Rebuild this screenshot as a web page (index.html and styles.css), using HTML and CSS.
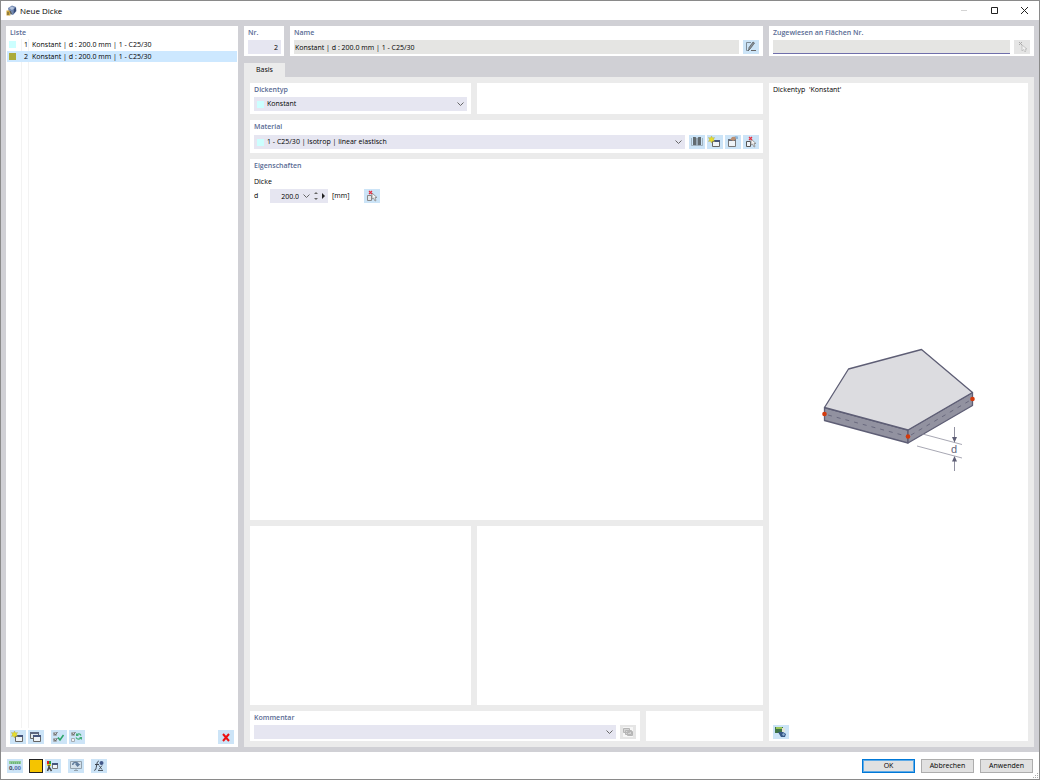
FILE: index.html
```html
<!DOCTYPE html>
<html lang="de">

<head>
    <meta charset="UTF-8">
    <meta name="viewport" content="width=device-width, initial-scale=1.0">
    <title>Neue Dicke</title>
    <link rel="stylesheet" href="styles.css">
</head>

<body>
    <div class="window">
        <header class="titlebar">
            <svg class="app-icon" viewBox="0 0 11 11" aria-hidden="true">
                <path d="M2 3 6 .5 10 2 10.500 6 7 10 3 9z" fill="#7288b0" />
                <path d="M3 3 6 1.500 8.500 3 6 5z" fill="#b4c3dc" />
                <path d="M8 4 10 2.500 10 6 7.500 9z" fill="#344a78" />
                <path d="M.5 5.500h3l1 5h-4z" fill="#cfa638" />
                <path d="M2 7v3M4 6l1.500 3" stroke="#5b563f" />
            </svg>
            <h1>Neue Dicke</h1>
            <div class="window-controls">
                <button type="button" aria-label="Minimieren" disabled>
                    <svg viewBox="0 0 9 9"><path d="M1 4.500h6" stroke="#d4d4d4" /></svg>
                </button>
                <button type="button" aria-label="Maximieren">
                    <svg viewBox="0 0 9 9"><path d="M1.500 1.500h6v6h-6z" fill="none" stroke="#222" /></svg>
                </button>
                <button type="button" aria-label="Schließen">
                    <svg viewBox="0 0 9 9"><path d="m1 1 7 7M8 1 1 8" stroke="#222" /></svg>
                </button>
            </div>
        </header>

        <main class="workspace">
            <aside class="panel list-panel">
                <h2>Liste</h2>
                <ul class="list" role="listbox" aria-label="Liste">
                    <li role="option" aria-selected="false">
                        <span class="swatch cyan"></span>
                        <span class="number">1</span>
                        <span>Konstant | d : 200.0 mm | 1 - C25/30</span>
                    </li>
                    <li class="selected" role="option" aria-selected="true">
                        <span class="swatch olive"></span>
                        <span class="number">2</span>
                        <span>Konstant | d : 200.0 mm | 1 - C25/30</span>
                    </li>
                </ul>
                <div class="toolbar">
                    <button class="icon-btn" type="button" aria-label="Neu">
                        <svg viewBox="0 0 16 14">
                            <path d="M5.500 5.500h7v6h-7z" fill="#eef3f7" stroke="#666" />
                            <path d="M6 5h7v2H6z" fill="#45557c" />
                            <path d="m4.500 1 1 2 2-.5-1 2 1 2-2-.5-1 2-1-2-2 .5 1-2-1-2 2 .5z" fill="#e6de2c" stroke="#a9a24a" stroke-width=".4" />
                        </svg>
                    </button>
                    <button class="icon-btn" type="button" aria-label="Kopieren">
                        <svg viewBox="0 0 16 14">
                            <path d="M2.500 2.500h8v6h-8z" fill="#dfe8ee" stroke="#666" />
                            <path d="M2 2h9v2H2z" fill="#5b6780" />
                            <path d="M5.500 5.500h7v6h-7z" fill="#eef3f7" stroke="#666" />
                            <path d="M5 5h8v2H5z" fill="#45557c" />
                        </svg>
                    </button>
                    <button class="icon-btn spaced" type="button" aria-label="Alle auswählen">
                        <svg viewBox="0 0 16 14">
                            <path d="M2.500 2.500h3v3h-3zM2.500 8.500h3v3h-3z" fill="#eef3f7" stroke="#a5adb3" />
                            <path d="m3 3 1 2 2.500-3M3 9l1 2 2.500-3" fill="none" stroke="#666" />
                            <path d="m7 7.500 2 2.500 3.500-5" fill="none" stroke="#2ba567" stroke-width="1.500" />
                        </svg>
                    </button>
                    <button class="icon-btn" type="button" aria-label="Auswahl umkehren">
                        <svg viewBox="0 0 16 14">
                            <path d="M2.500 2.500h3v3h-3zM2.500 8.500h3v3h-3z" fill="#eef3f7" stroke="#a5adb3" />
                            <path d="m3 3 1 2 2.500-3" fill="none" stroke="#666" />
                            <path d="M12 5.500c-1-2-3-2-4-.5M7 7.500c1 2 3 2 5 .5" fill="none" stroke="#43ad78" stroke-width="1.200" />
                            <path d="M7 3v3h3zM13 10V7h-3z" fill="#43ad78" />
                        </svg>
                    </button>
                    <button class="icon-btn push" type="button" aria-label="Löschen">
                        <svg viewBox="0 0 16 14"><path d="m5 4 6 7m0-7-6 7" stroke="#ed1111" stroke-width="2" /></svg>
                    </button>
                </div>
            </aside>

            <form class="editor" id="thickness">
                <div class="split">
                    <div class="identity">
                        <div class="panel number-panel">
                            <label for="nr">Nr.</label>
                            <input class="field right" id="nr" type="text" value="2">
                        </div>
                        <div class="panel">
                            <label for="name">Name</label>
                            <div class="row">
                                <input class="field gray" id="name" type="text" value="Konstant | d : 200.0 mm | 1 - C25/30" readonly>
                                <button class="icon-btn" type="button" aria-label="Name bearbeiten">
                                    <svg viewBox="0 0 16 14">
                                        <path d="M8 2.500H3.500v8H6" fill="none" stroke="#7d8b96" />
                                        <path d="m5.500 10.500.5-3 4-5.500 1.500 1-4 5.500z" fill="#8a949c" stroke="#444" stroke-width=".6" />
                                        <path d="M8 10.500h5" stroke="#666" />
                                    </svg>
                                </button>
                            </div>
                        </div>
                    </div>
                    <div class="panel assigned">
                        <label for="areas">Zugewiesen an Flächen Nr.</label>
                        <div class="row">
                            <input class="field gray underlined" id="areas" type="text">
                            <button class="icon-btn" type="button" aria-label="Flächen wählen" disabled>
                                <svg viewBox="0 0 16 14">
                                    <path d="m5 2 3 3m0-3L5 5" stroke="#aaa" />
                                    <path d="M8 5v6l1.500-1.500L11 12l1-1-1-2h2z" fill="#f3f3f3" stroke="#bbb" stroke-width=".8" />
                                </svg>
                            </button>
                        </div>
                    </div>
                </div>

                <div class="tabs" role="tablist">
                    <button type="button" role="tab" aria-selected="true">Basis</button>
                </div>

                <div class="split page" role="tabpanel">
                    <div class="settings">
                        <div class="pair">
                            <section class="panel type">
                                <label for="type">Dickentyp</label>
                                <div class="combo">
                                    <span class="swatch cyan"></span>
                                    <select id="type"><option>Konstant</option></select>
                                    <svg class="chevron" viewBox="0 0 7 4"><path d="m.5.500 3 3 3-3" /></svg>
                                </div>
                            </section>
                            <section class="panel"></section>
                        </div>

                        <section class="panel material">
                            <label for="material">Material</label>
                            <div class="row">
                                <div class="combo">
                                    <span class="swatch cyan"></span>
                                    <select id="material"><option>1 - C25/30 | Isotrop | linear elastisch</option></select>
                                    <svg class="chevron" viewBox="0 0 7 4"><path d="m.5.500 3 3 3-3" /></svg>
                                </div>
                                <div class="toolbar">
                                    <button class="icon-btn" type="button" aria-label="Bibliothek">
                                        <svg viewBox="0 0 16 14">
                                            <path d="M4 2h2.500l1 1v8l-1-1H4zM12 2H9.500l-1 1v8l1-1H12z" fill="#626b70" />
                                            <path d="M2.500 3v7.500H7M13.500 3v7.500H9" fill="none" stroke="#8e9ca5" stroke-width=".7" />
                                        </svg>
                                    </button>
                                    <button class="icon-btn" type="button" aria-label="Neues Material">
                                        <svg viewBox="0 0 16 14">
                                            <path d="M5.500 5.500h7v6h-7z" fill="#eef3f7" stroke="#666" />
                                            <path d="M6 5h7v2H6z" fill="#45557c" />
                                            <path d="m4.500 1 1 2 2-.5-1 2 1 2-2-.5-1 2-1-2-2 .5 1-2-1-2 2 .5z" fill="#e6de2c" stroke="#a9a24a" stroke-width=".4" />
                                        </svg>
                                    </button>
                                    <button class="icon-btn" type="button" aria-label="Material bearbeiten">
                                        <svg viewBox="0 0 16 14">
                                            <path d="M3.500 4.500h7v7h-7z" fill="#eef3f7" stroke="#777" />
                                            <path d="M3 4h8v2H3z" fill="#666d78" />
                                            <path d="m5 5 2-3 4-.5 1 2-4 2.500-1-1z" fill="#b98e72" />
                                            <path d="m10 1 3 .5V4h-2z" fill="#8db7dc" />
                                        </svg>
                                    </button>
                                    <button class="icon-btn" type="button" aria-label="Material wählen">
                                        <svg viewBox="0 0 16 14">
                                            <path d="M3.500 6.500h4v5h-4z" fill="#eef3f7" stroke="#555" />
                                            <path d="M8 4v6l1.500-1 1.500 3 1-.5-1-3h2z" fill="#f5f5f5" stroke="#888" stroke-width=".8" />
                                            <path d="m6 2 3 3m0-3L6 5" stroke="#e33040" stroke-width="1.200" />
                                        </svg>
                                    </button>
                                </div>
                            </div>
                        </section>

                        <section class="panel properties">
                            <h2>Eigenschaften</h2>
                            <h3>Dicke</h3>
                            <div class="measure">
                                <label for="depth">d</label>
                                <div class="spinner">
                                    <input id="depth" type="text" value="200.0">
                                    <svg class="chevron" viewBox="0 0 7 4"><path d="m.5.500 3 3 3-3" /></svg>
                                    <svg class="steps" viewBox="0 0 4 8" aria-hidden="true"><path d="M0 2 2 0l2 2zM0 6l2 2 2-2z" /></svg>
                                    <svg class="more" viewBox="0 0 4 6" aria-hidden="true"><path d="m0 0 3 3-3 3z" /></svg>
                                </div>
                                <span class="unit">[mm]</span>
                                <button class="icon-btn" type="button" aria-label="Dicke wählen">
                                    <svg viewBox="0 0 16 14">
                                        <path d="M3.500 6.500h4v5h-4z" fill="#e4e8eb" stroke="#888" />
                                        <path d="M8 4v6l1.500-1 1.500 3 1-.5-1-3h2z" fill="#f5f5f5" stroke="#888" stroke-width=".8" />
                                        <path d="m5 2 3 3m0-3L5 5" stroke="#e33040" stroke-width="1.200" />
                                    </svg>
                                </button>
                            </div>
                        </section>

                        <div class="pair lower">
                            <section class="panel"></section>
                            <section class="panel"></section>
                        </div>

                        <div class="comment-row">
                            <section class="panel">
                                <label for="comment">Kommentar</label>
                                <div class="row">
                                    <div class="combo">
                                        <select id="comment"><option></option></select>
                                        <svg class="chevron" viewBox="0 0 7 4"><path d="m.5.500 3 3 3-3" /></svg>
                                    </div>
                                    <button class="icon-btn" type="button" aria-label="Kommentar übernehmen" disabled>
                                        <svg viewBox="0 0 16 14">
                                            <path d="M3 2h10v10H3z" fill="#f6f6f6" />
                                            <path d="M3.500 3.500h6v4h-6zM5.500 5.500h6v4h-6zM7.500 6.500h5v4h-5z" fill="#d4d4d4" stroke="#b5b5b5" />
                                        </svg>
                                    </button>
                                </div>
                            </section>
                            <section class="panel"></section>
                        </div>
                    </div>

                    <aside class="panel preview">
                        <p>Dickentyp &nbsp;'Konstant'</p>
                        <svg class="plate" viewBox="0 0 152 126" role="img" aria-label="Platte mit Dicke d">
                            <g stroke="#5e5e75" stroke-width="1.300" stroke-linejoin="round">
                                <path d="M1.500 60.500 85 83v13L1.500 73.500z" fill="#9292a0" />
                                <path d="M85 83 149.500 45.500v13L85 96z" fill="#9292a0" />
                                <path d="M1.500 60.500 25.500 22 98.500 2.500l51 43L85 83z" fill="#dcdce0" />
                            </g>
                            <path d="m5 68 78 21m5-1 58-34" fill="none" stroke="#5e5e75" stroke-width=".8" stroke-dasharray="4 5" />
                            <path d="m94 85.500 45 12M94 99l45 12" stroke="#9090a0" stroke-width=".8" />
                            <path d="M131.500 80v11m0 19v14" stroke="#9090a0" />
                            <path d="M129 90h5l-2.500 5.500zM129 114.500h5l-2.500-5.500z" fill="#5e5e75" />
                            <g fill="#d33a0c">
                                <circle cx="1.500" cy="67" r="2.300" />
                                <circle cx="85" cy="89.500" r="2.300" />
                                <circle cx="149.500" cy="52" r="2.300" />
                            </g>
                            <text x="128" y="106">d</text>
                        </svg>
                        <button class="icon-btn" type="button" aria-label="Bild">
                            <svg viewBox="0 0 16 14">
                                <path d="M2 2h8v6H2z" fill="#3e7548" />
                                <path d="M3 2h6v2H3z" fill="#9bc65a" />
                                <path d="M9 3h3v4H9z" fill="#e3e6d8" />
                                <path d="M5 7h5l3 2-1 3H8z" fill="#365887" />
                                <path d="m9 9 2-1 1 2-2 1z" fill="#8cb0d5" />
                            </svg>
                        </button>
                    </aside>
                </div>
            </form>
        </main>

        <footer class="footer">
            <div class="toolbar">
                <button class="icon-btn" type="button" aria-label="Einheiten">
                    <svg viewBox="0 0 16 14">
                        <path d="M2 2h12v3H2z" fill="#8fcb98" />
                        <path d="M4.500 3v2m2-2v2m2-2v2m2-2v2m2-2v2" stroke="#5fa870" stroke-width=".7" />
                        <text class="digits" x="2" y="11">0,<tspan fill="#5873ac">00</tspan></text>
                    </svg>
                </button>
                <button class="color-btn" type="button" aria-label="Farbe"></button>
                <button class="icon-btn" type="button" aria-label="Anzeige">
                    <svg viewBox="0 0 16 14">
                        <path d="M2 2h2v3H2z" fill="#df2020" />
                        <path d="M4 2h2v3H4z" fill="#1c9a45" />
                        <path d="M2 5h4v2H2z" fill="#d9ce2b" />
                        <path d="M4 6v2l-1.500 4M4 8l2.500 4" fill="none" stroke="#444" stroke-width="1.500" />
                        <path d="M7.500 4.500h5v5h-5z" fill="#eef3f7" stroke="#777" />
                        <path d="M7 4h6v2H7z" fill="#45557c" />
                    </svg>
                </button>
                <button class="icon-btn spaced" type="button" aria-label="Ansicht">
                    <svg viewBox="0 0 16 14">
                        <path d="M2.500 2.500h11v7h-11z" fill="#d5e2ec" stroke="#93a2ae" />
                        <path d="M8 10v1.500M6 11.500h4" stroke="#93a2ae" />
                        <path d="M4 6c0-4 6-4 7-1h1.500L9.500 8 7 5h1.500C7.500 4 5.500 4 5.500 6z" fill="#607c9c" />
                    </svg>
                </button>
                <button class="icon-btn spaced" type="button" aria-label="Formel">
                    <svg viewBox="0 0 16 14">
                        <path d="M8 2.500C6.500 1.500 6 4 5.500 7s-1 5-2.500 4M4 5.500h4" fill="none" stroke="#3e4650" />
                        <path d="m8 6.500 3 4m0-4-3 4M7 11.500h5" stroke="#3e4650" stroke-width=".9" />
                        <circle cx="10.500" cy="4" r="2" fill="#43598b" />
                    </svg>
                </button>
            </div>
            <div class="actions">
                <button class="primary" type="submit" form="thickness">OK</button>
                <button type="button">Abbrechen</button>
                <button type="button">Anwenden</button>
            </div>
            <svg class="grip" viewBox="0 0 6 6" aria-hidden="true">
                <path d="M4 0h1v1H4zM2 2h1v1H2zM4 2h1v1H4zM0 4h1v1H0zM2 4h1v1H2zM4 4h1v1H4z" fill="#aaa" />
            </svg>
        </footer>
    </div>
</body>

</html>
```

FILE: styles.css
```css
*,
*::before,
*::after {
  box-sizing: border-box;
}

body {
  margin: 0;
  font-family: "Open Sans", "Noto Sans", sans-serif;
  font-size: 7px;
  line-height: 10px;
  color: #000;
}

button,
input,
select {
  font: inherit;
  color: inherit;
  margin: 0;
  padding: 0;
  border: 0;
  border-radius: 0;
}

svg {
  display: block;
}

h1,
h2,
h3,
p,
ul {
  margin: 0;
  padding: 0;
}

.window {
  display: flex;
  flex-direction: column;
  min-height: 100vh;
  border: 1px solid #8a8a8a;
  background-color: #fff;
}

/* title bar */
.titlebar {
  display: flex;
  align-items: center;
  height: 19px;
  padding-left: 5px;
}

.app-icon {
  width: 11px;
  height: 11px;
}

.titlebar h1 {
  margin-left: 3px;
  font-size: 8px;
  font-weight: 400;
}

.window-controls {
  display: flex;
  margin-left: auto;
}

.window-controls button {
  display: grid;
  place-items: center;
  width: 30px;
  height: 19px;
  background: none;
}

.window-controls svg {
  width: 9px;
  height: 9px;
}

/* layout */
.workspace {
  flex: 1;
  display: grid;
  grid-template-columns: 232px 1fr;
  gap: 6px;
  padding: 6px 5px 5px;
  background-color: #d0d0d5;
}

.editor {
  display: flex;
  flex-direction: column;
  min-width: 0;
}

.split {
  display: grid;
  grid-template-columns: 1fr 265px;
  gap: 6px;
}

.identity {
  display: grid;
  grid-template-columns: 40px 1fr;
  gap: 6px;
}

.page {
  flex: 1;
  grid-template-columns: 1fr 259px;
  padding: 6px 6px 6px 6px;
  background-color: #ebebeb;
}

.settings {
  display: flex;
  flex-direction: column;
  gap: 6px;
}

.pair,
.comment-row {
  display: grid;
  grid-template-columns: 221fr 286fr;
  gap: 6px;
}

.comment-row {
  grid-template-columns: 390fr 117fr;
}

.properties {
  flex: 2;
}

.lower {
  flex: 1;
}

/* panels */
.panel {
  min-width: 0;
  padding: 2px 4px;
  background-color: #fff;
}

.panel > label,
.panel h2 {
  display: block;
  margin-bottom: 2px;
  font-size: 7px;
  font-weight: 600;
  line-height: 10px;
  color: #596b94;
}

.type {
  padding-bottom: 3px;
}

.material {
  padding-bottom: 4px;
}

.material > label {
  margin-bottom: 3px;
}

.row {
  display: flex;
  gap: 4px;
}

.field {
  display: block;
  width: 100%;
  height: 14px;
  padding: 0 1px;
  background-color: #e6e6f1;
}

.number-panel {
  padding-right: 3px;
}

.number-panel .field {
  padding-right: 3px;
}

.right {
  text-align: right;
}

.gray {
  background-color: #e5e5e3;
}

.underlined {
  border-bottom: 1px solid #706fab;
}

.combo {
  flex: 1;
  display: flex;
  align-items: center;
  gap: 3px;
  height: 14px;
  padding: 0 3px;
  background-color: #e6e6f1;
}

.combo select {
  flex: 1;
  height: 14px;
  background: none;
  appearance: none;
}

.swatch {
  width: 7px;
  height: 7px;
}

.cyan {
  background-color: #ccffff;
}

.olive {
  background-color: #abab3c;
}

.chevron {
  width: 7px;
  height: 4px;
  fill: none;
  stroke: #666;
  pointer-events: none;
}

/* buttons */
.toolbar {
  display: flex;
  gap: 2px;
}

.icon-btn {
  flex: none;
  width: 16px;
  height: 14px;
  background-color: #cce4f7;
}

.icon-btn:disabled {
  background-color: #e5e5e5;
}

.icon-btn svg {
  width: 16px;
  height: 14px;
}

.spaced {
  margin-left: 5px;
}

.push {
  margin-left: auto;
}

/* list */
.list-panel {
  display: flex;
  flex-direction: column;
  padding: 2px 1px 3px;
}

.list-panel h2 {
  margin: 0 0 1px 3px;
}

.list {
  flex: 1;
  list-style: none;
  background: linear-gradient(to right, transparent 14px, #f3f3f3 14px 15px, transparent 15px 21px, #f3f3f3 21px 22px, transparent 22px);
}

.list li {
  display: grid;
  grid-template-columns: 7px 8px 1fr;
  align-items: center;
  column-gap: 4px;
  height: 11px;
  margin-bottom: 1px;
  padding-left: 2px;
}

.list .number {
  text-align: right;
}

.list .selected {
  background-color: #cde8ff;
}

.list-panel .toolbar {
  margin-top: 2px;
  padding: 0 3px;
}

/* tabs */
.tabs {
  display: flex;
  margin-top: 7px;
}

.tabs button {
  width: 41px;
  height: 14px;
  background-color: #ebebeb;
}

/* thickness value */
.properties h3 {
  margin: 6px 0 2px;
  font-size: 7px;
  font-weight: 400;
}

.measure {
  display: flex;
  align-items: center;
}

.measure label {
  width: 16px;
}

.spinner {
  display: flex;
  align-items: center;
  gap: 4px;
  width: 58px;
  height: 14px;
  padding-right: 2px;
  background-color: #e6e6f1;
}

.spinner input {
  flex: 1;
  min-width: 0;
  height: 14px;
  text-align: right;
  background: none;
}

.steps {
  width: 4px;
  height: 8px;
  fill: #666;
}

.more {
  width: 4px;
  height: 6px;
  fill: #222;
}

.unit {
  width: 32px;
  margin-left: 4px;
}

/* preview */
.preview {
  display: flex;
  flex-direction: column;
}

.plate {
  width: 152px;
  height: 126px;
  margin: auto;
  overflow: visible;
}

.plate text {
  font-family: "Liberation Sans", sans-serif;
  font-size: 11px;
  fill: #66667a;
}

/* footer */
.footer {
  position: relative;
  display: flex;
  align-items: center;
  justify-content: space-between;
  height: 27px;
  padding: 0 6px;
}

.color-btn {
  width: 14px;
  height: 14px;
  margin-left: 4px;
  border: 1px solid #222;
  background-color: #f5c400;
}

.digits {
  font-size: 6px;
  font-weight: 700;
  fill: #445;
}

.actions {
  display: flex;
  gap: 6px;
}

.actions button {
  width: 53px;
  height: 14px;
  border: 1px solid #adadad;
  background-color: #e1e1e1;
}

.actions .primary {
  border-color: #0078d7;
  box-shadow: inset 0 0 0 1px #60abe6;
}

.grip {
  position: absolute;
  right: 0;
  bottom: 0;
  width: 6px;
  height: 6px;
}
```
